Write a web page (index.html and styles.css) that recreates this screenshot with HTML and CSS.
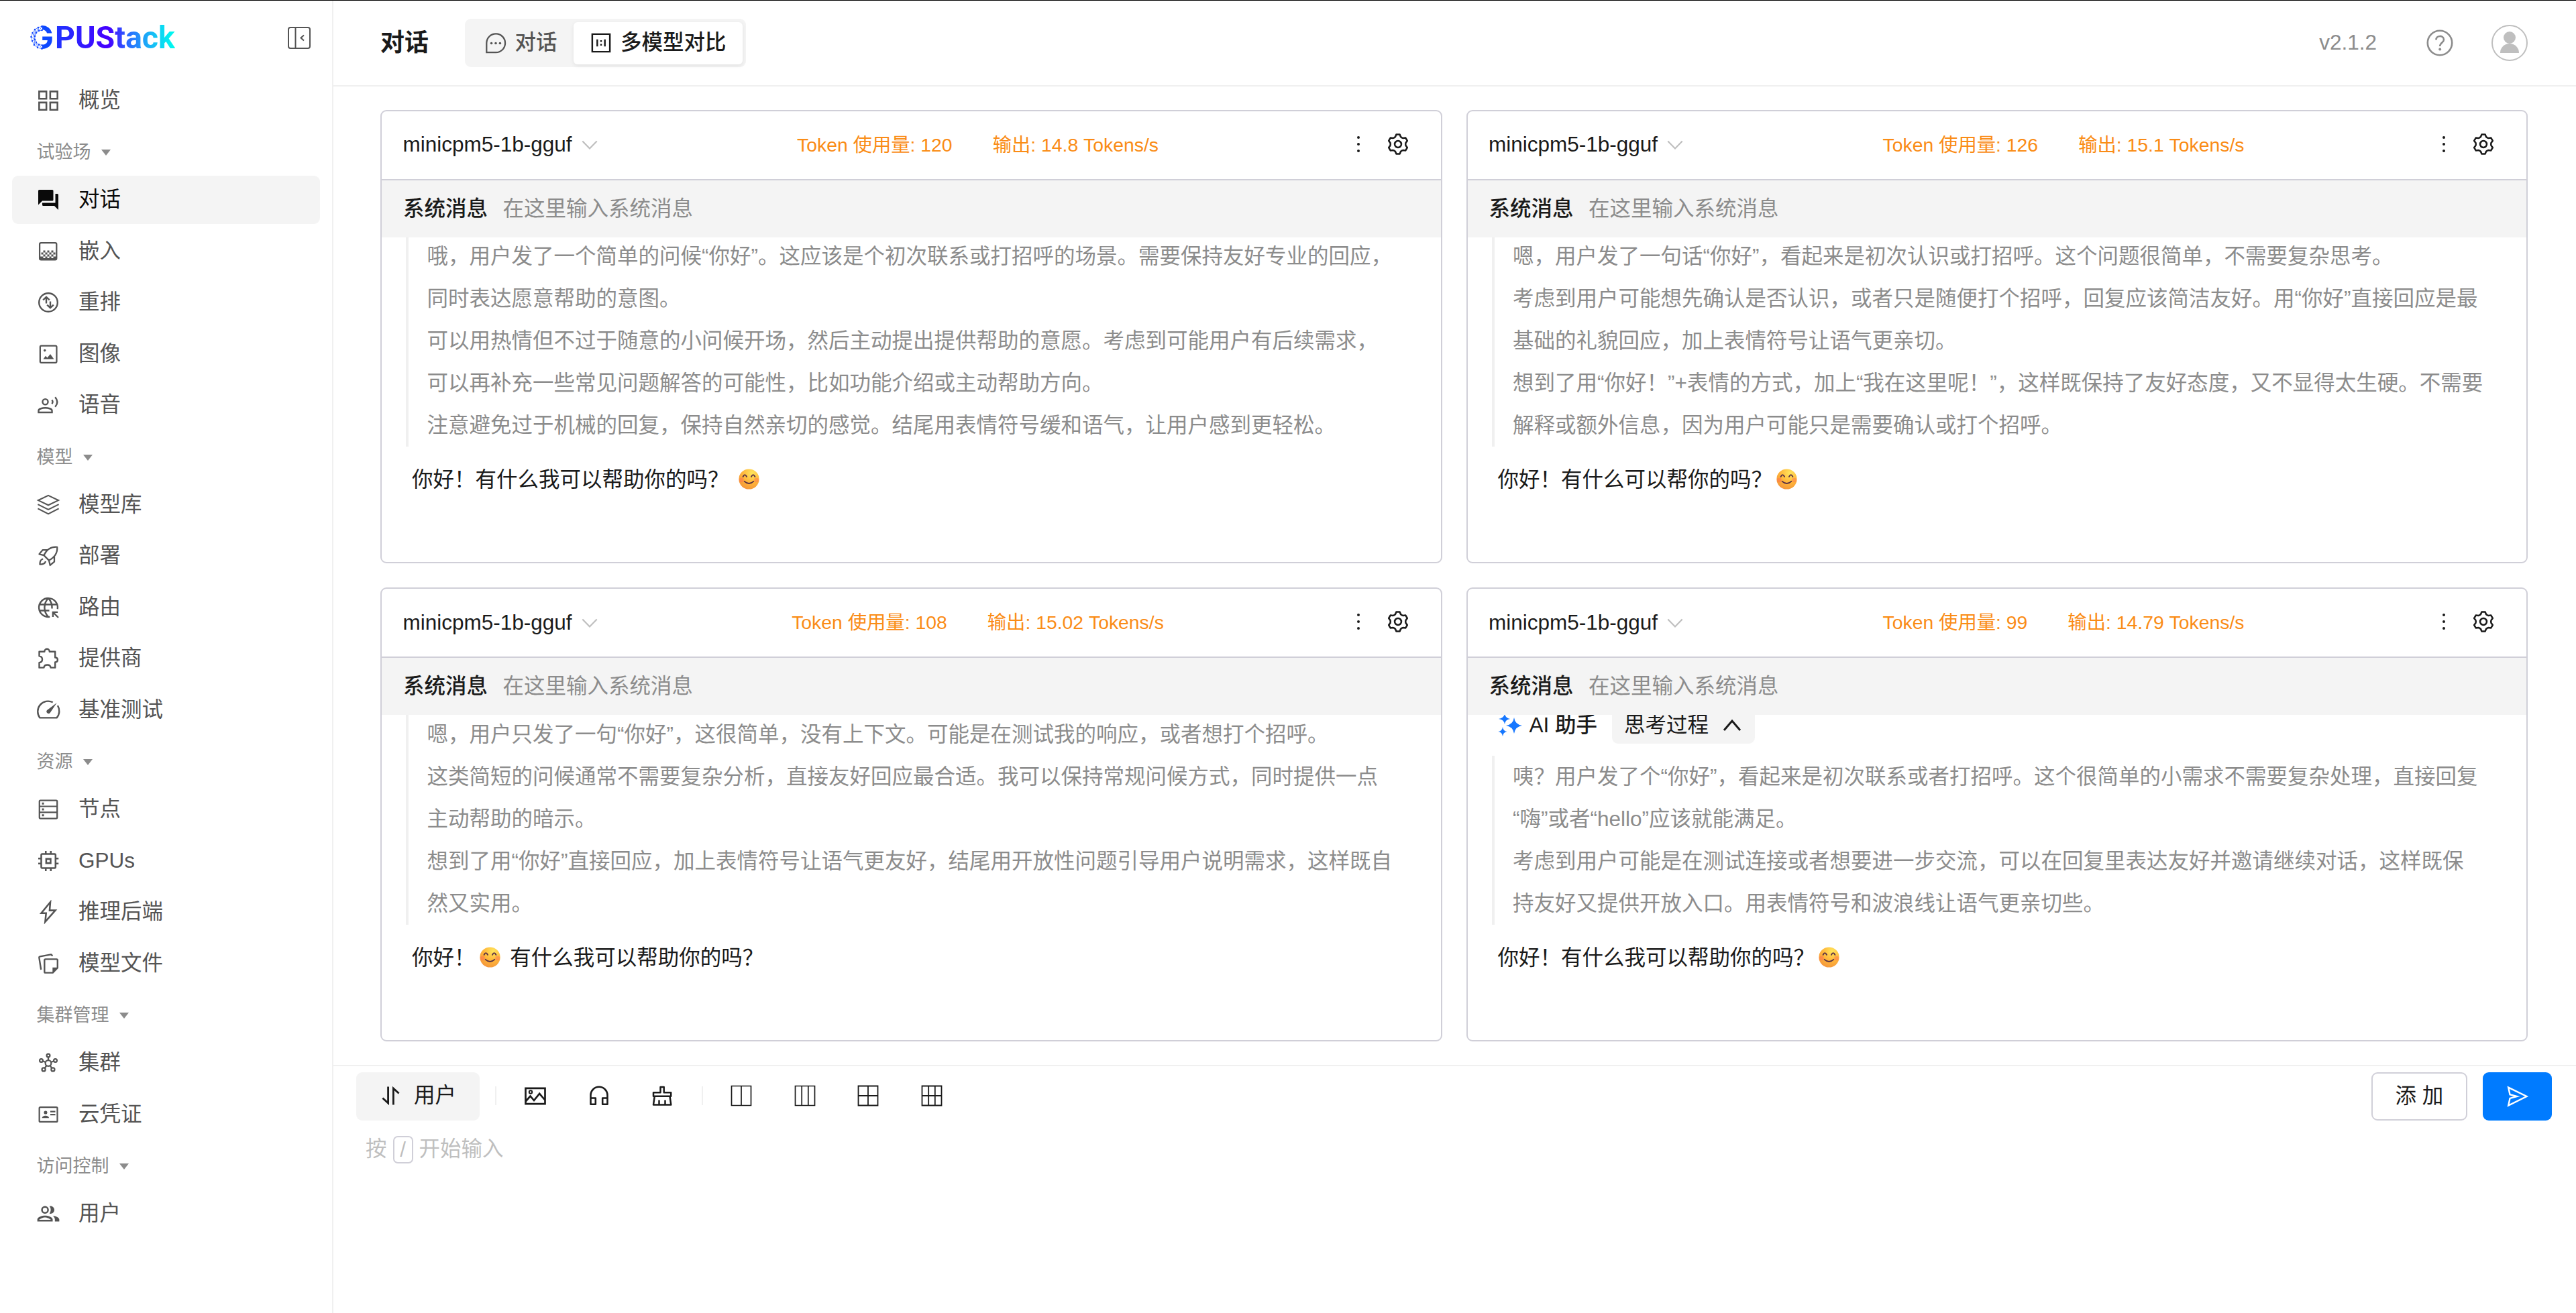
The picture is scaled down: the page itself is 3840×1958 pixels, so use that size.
FILE: index.html
```html
<!DOCTYPE html>
<html lang="zh-CN">
<head>
<meta charset="utf-8">
<title>GPUStack</title>
<link rel="stylesheet" href="styles.css">
</head>
<body>
<svg class="sprite" width="0" height="0" aria-hidden="true">
  <symbol id="i-grid" viewBox="0 0 24 24"><path fill="none" stroke="currentColor" stroke-width="1.7" d="M2.9 2.9h7.2v7.2H2.9zM13.9 2.9h7.2v7.2h-7.2zM2.9 13.9h7.2v7.2H2.9zM13.9 13.9h7.2v7.2h-7.2z"/></symbol>
  <symbol id="i-chat" viewBox="0 0 24 24"><path fill="currentColor" d="M3 2h13a1 1 0 0 1 1 1v9a1 1 0 0 1-1 1H6l-4 4V3a1 1 0 0 1 1-1zM19 6h2a1 1 0 0 1 1 1v15l-4-4H7a1 1 0 0 1-1-1v-2h13z"/></symbol>
  <symbol id="i-embed" viewBox="0 0 24 24"><rect x="3.4" y="3.4" width="16.8" height="16.8" rx="1.4" fill="none" stroke="currentColor" stroke-width="1.5"/><path fill="currentColor" d="M7 11h2v2H7zM11 11h2v2h-2zM15 11h2v2h-2zM5 13h2v2H5zM9 13h2v2H9zM13 13h2v2h-2zM17 13h2v2h-2zM7 15h2v2H7zM11 15h2v2h-2zM15 15h2v2h-2zM4 17h3v1.6h2V17h2v1.6h2V17h2v1.6h2V17h3v3.5H4z"/></symbol>
  <symbol id="i-rank" viewBox="0 0 24 24"><g fill="none" stroke="currentColor" stroke-width="1.6"><circle cx="12" cy="12" r="9.2"/><path d="M6.8 9.6 10 6.6l3.2 3M10 7v6M10.8 14.4l3.2 3 3.2-3M14 17v-6"/></g></symbol>
  <symbol id="i-image" viewBox="0 0 24 24"><rect x="3.9" y="3.7" width="16.4" height="16.8" rx="1.2" fill="none" stroke="currentColor" stroke-width="1.5"/><circle cx="8.5" cy="8.4" r="1.2" fill="currentColor"/><path fill="currentColor" d="m7 17 2.3-3.2 1.7 1.8 3-3.6 3.6 5z"/></symbol>
  <symbol id="i-voice" viewBox="0 0 24 24"><g fill="none" stroke="currentColor" stroke-width="1.6"><circle cx="9" cy="8.8" r="2.7"/><path d="M2.3 19.3v-1.6c0-2 4-2.9 6.7-2.9s6.7.9 6.7 2.9v1.6zM15.6 7q1.5 1.9 0 3.8M18.8 4.2q4.2 4.8 0 9.6"/></g></symbol>
  <symbol id="i-layers" viewBox="0 0 24 24"><g fill="none" stroke="currentColor" stroke-width="1.4"><path d="M12 2.6 22 7.4 12 12.2 2 7.4zM1.6 11.4 12 16.6l10.400-5.200M1.600 15.600 12 20.900l10.400-5.300"/></g></symbol>
  <symbol id="i-rocket" viewBox="0 0 24 24"><g fill="none" stroke="currentColor" stroke-width="1.5" stroke-linejoin="round"><path d="M7.600 11.400C10 6.500 14.500 2.700 20.800 3.200c.5 6-3.200 10.500-8.200 13.200zM11.400 6H6.500L3 10.200l4.600 1.200M18 12.600v5.200L13.800 21.300l-1.200-4.900M6.800 15c-2.200.400-3.200 2.800-3.200 5.400 2.800 0 5.200-.700 5.700-3.100"/></g></symbol>
  <symbol id="i-globe" viewBox="0 0 24 24"><g fill="none" stroke="currentColor" stroke-width="1.600"><path d="M13.500 21.200A9.300 9.300 0 1 1 21.200 13.500M3.200 9h17.600M3.200 15h9.800M12 2.800C7 8 7 16 12 21.200M12 2.800c2.800 2.900 3.900 6.500 3.700 10.200M22 22l-5-5M16.600 21.400v-4.800h4.800"/></g></symbol>
  <symbol id="i-puzzle" viewBox="0 0 24 24"><path fill="none" stroke="currentColor" stroke-width="1.600" stroke-linejoin="round" d="M3 5.200h5.200c0-3.600 5-3.600 5 0h5.600V11c3.300 0 3.300 4.600 0 4.600v5.500h-4.400c-.4-3.700-6.400-3.700-6.800 0H3v-5c4-.5 4-6 0-6.500z"/></symbol>
  <symbol id="i-gauge" viewBox="0 0 24 24"><g fill="none" stroke="currentColor" stroke-width="1.600" stroke-linejoin="round"><path d="M16.500 4.200A10.300 10.300 0 0 0 3.600 19.600h16.800a10.300 10.300 0 0 0 .900-12.200"/></g><path fill="currentColor" d="M20.500 4.700 13.800 14.700a2 2 0 1 1-3-2.700z"/></symbol>
  <symbol id="i-server" viewBox="0 0 24 24"><rect x="3.200" y="3" width="17.600" height="18" rx="1" fill="none" stroke="currentColor" stroke-width="1.500"/><path fill="none" stroke="currentColor" stroke-width="1.400" d="M3 9h18M3 14.900h18"/><path fill="currentColor" d="M5.700 5.100h2v2h-2zM5.700 11h2v2h-2zM5.700 16.900h2v2h-2z"/></symbol>
  <symbol id="i-chip" viewBox="0 0 24 24"><g fill="none" stroke="currentColor" stroke-width="1.700"><rect x="5" y="5" width="14.200" height="14" rx="1"/><path d="M9.900 9.900h4.400v4.200H9.900zM9.500 2v3M14.500 2v3M9.500 19v3M14.500 19v3M2 9.500h3M2 14.500h3M19 9.500h3.200M19 14.500h3.200"/></g></symbol>
  <symbol id="i-bolt" viewBox="0 0 24 24"><path fill="none" stroke="currentColor" stroke-width="1.700" d="M14 2.200 5 13.200h4.800L8.900 21.800 19 10.400h-5.700z"/></symbol>
  <symbol id="i-files" viewBox="0 0 24 24"><g fill="none" stroke="currentColor" stroke-width="1.600"><path d="M8.200 8.600q0-1 1-1h11q1 0 1 1v7.600l-4.700 4.900H9.200q-1 0-1-1zM4.800 18 2.900 6.100q-.1-1 .9-1.200L14.600 2.900q1-.1 1.300 1.700"/></g><path fill="currentColor" d="M16.200 15.800h5.300l-5.300 5.600z"/></symbol>
  <symbol id="i-hub" viewBox="0 0 24 24"><g fill="none" stroke="currentColor" stroke-width="1.500"><circle cx="12" cy="12.300" r="2.900"/><circle cx="12" cy="4.700" r="1.600"/><circle cx="5" cy="9.600" r="1.600"/><circle cx="19" cy="9.600" r="1.600"/><circle cx="7.400" cy="18.600" r="1.700"/><circle cx="16.600" cy="18.600" r="1.700"/><path d="M12 6.300v3M6.500 10.200l2.800 1.100M17.500 10.200l-2.800 1.100M8.500 17.300l1.700-2.600M15.500 17.300l-1.700-2.600"/></g></symbol>
  <symbol id="i-card" viewBox="0 0 24 24"><rect x="3.100" y="4.700" width="17.900" height="14.600" rx="1" fill="none" stroke="currentColor" stroke-width="1.500"/><path fill="currentColor" d="M5.800 15.500c0-3.200 6.900-3.200 6.900 0zM14 8.400h5v1.400h-5zM14 11.400h5v1.400h-5z"/><circle cx="9.300" cy="10" r="1.700" fill="currentColor"/></symbol>
  <symbol id="i-users" viewBox="1.300 1 21.400 22"><path fill="currentColor" d="M9 13.750c-2.340 0-7 1.170-7 3.500V19h14v-1.750c0-2.330-4.660-3.500-7-3.500zM3.600 17.500c.84-.9 3.600-2.200 5.400-2.200s4.560 1.300 5.400 2.200zM9 12c1.930 0 3.500-1.570 3.500-3.500S10.930 5 9 5 5.500 6.570 5.500 8.500 7.070 12 9 12zm0-5.500a2 2 0 1 1 0 4 2 2 0 0 1 0-4zm7.040 7.310c1.160.84 1.960 1.960 1.960 3.440V19h4v-1.750c0-2.020-3.500-3.170-5.960-3.440zM14 12c1.930 0 3.500-1.570 3.500-3.500S15.930 5 14 5c-.4 0-.6.100-.9.200 1.500 2 1.500 4.600 0 6.600.3.100.5.200.9.200z"/></symbol>

  <symbol id="i-collapse" viewBox="0 0 36 36"><g fill="none" stroke="currentColor" stroke-width="2"><rect x="2" y="3" width="32" height="31" rx="3"/><path d="M12.500 3v31M25 14.500 20.500 18.500l4.500 4" /></g></symbol>
  <symbol id="i-message" viewBox="0 0 36 36"><path fill="none" stroke="currentColor" stroke-width="2.400" d="M3.500 33V18A14.700 14.700 0 1 1 18 33z"/><g fill="currentColor"><circle cx="11.200" cy="18.500" r="1.900"/><circle cx="18" cy="18.500" r="1.900"/><circle cx="24.800" cy="18.500" r="1.900"/></g></symbol>
  <symbol id="i-ratio" viewBox="0 0 36 36"><path fill="none" stroke="currentColor" stroke-width="2.600" d="M4.100 4.100h27.800v27.800H4.100zM12 12.500v11M24 12.500v11"/><path fill="currentColor" d="M16.700 13.700h2.600v2.600h-2.600zM16.700 19.700h2.600v2.600h-2.600z"/></symbol>
  <symbol id="i-help" viewBox="0 0 40 40"><g fill="none" stroke="currentColor"><circle cx="20" cy="20" r="18.200" stroke-width="2.600"/><path stroke-width="2.600" d="M14.500 15.500c0-7.500 11.500-7.200 11.500-.5 0 4.500-5.800 4.500-5.800 10"/></g><circle cx="20.200" cy="29.500" r="2" fill="currentColor"/></symbol>
  <symbol id="i-down" viewBox="0 0 24 24"><path fill="none" stroke="currentColor" stroke-width="2.200" d="m1.300 6.500 10.700 11 10.700-11"/></symbol>
  <symbol id="i-up" viewBox="0 0 28 28"><path fill="none" stroke="currentColor" stroke-width="3" d="m2 21 12-14 12 14"/></symbol>
  <symbol id="i-dots" viewBox="0 0 24 24"><g fill="currentColor"><circle cx="12" cy="2" r="2"/><circle cx="12" cy="12" r="2"/><circle cx="12" cy="22" r="2"/></g></symbol>
  <symbol id="i-gear" viewBox="-12 -12 24 24"><g fill="none" stroke="currentColor" stroke-width="1.700" stroke-linejoin="round"><path d="M-1.700-9.650H1.700L2.670-7.330Q3.800-6.200 5.010-5.980L7.510-6.300 9.210-3.350 7.680-1.350Q7.300 0 7.680 1.350L9.210 3.350 7.510 6.300 5.010 5.980Q3.800 6.200 2.670 7.330L1.700 9.650H-1.700L-2.670 7.330Q-3.800 6.200-5.010 5.980L-7.510 6.300-9.210 3.350-7.680 1.350Q-7.300 0-7.680-1.350L-9.210-3.350-7.510-6.300-5.010-5.980Q-3.800-6.200-2.670-7.330z"/><circle r="3.300"/></g></symbol>
  <symbol id="i-sparkle" viewBox="0 0 36 36"><path fill="currentColor" d="M24 6q1.400 10.300 12 12-10.600 1.700-12 12-1.400-10.300-12-12Q22.600 16.300 24 6zM10 0q.900 6.900 8 8-7.100 1.100-8 8-.9-6.900-9-8 8.100-1.100 9-8zM7 20q.700 6 6.500 7Q7.700 28 7 34 6.300 28 .500 27 6.300 26 7 20z"/></symbol>
  <symbol id="i-swap" viewBox="0 0 28 28"><path fill="none" stroke="currentColor" stroke-width="2.800" d="M9.600.500V25L1.400 17.500M17.400 27.500V3l8.200 7.500"/></symbol>
  <symbol id="i-picture" viewBox="0 0 36 36"><g fill="none" stroke="currentColor" stroke-width="2.700"><path d="M3.500 6.800h29v23.400h-29zM4 26l6.500-7.500L16 25l8.200-10.200L32 24"/><circle cx="11" cy="12.500" r="2.200" stroke-width="2"/></g></symbol>
  <symbol id="i-headset" viewBox="0 0 36 36"><path fill="none" stroke="currentColor" stroke-width="2.600" stroke-linejoin="round" d="M5.500 21.500v-4.200a12.500 12.500 0 0 1 25 0v4.200M5.500 21.500h7.300v9.300H5.500zM23.200 21.500h7.300v9.300h-7.300z"/></symbol>
  <symbol id="i-clear" viewBox="0 0 36 36"><g fill="none" stroke="currentColor" stroke-width="2.500" stroke-linejoin="round"><path d="M15.500 5h5.200v8.200h10.500v5.600H5v-5.600h10.500zM6.800 18.800 5 31.500h26.300l-1.800-12.700M13.500 31v-6.500M22.500 31v-6.500"/></g></symbol>
  <symbol id="i-cols2" viewBox="0 0 36 36"><path fill="none" stroke="currentColor" stroke-width="1.700" d="M3.500 3.500h29v29h-29zM18 3.500v29"/></symbol>
  <symbol id="i-cols3" viewBox="0 0 36 36"><path fill="none" stroke="currentColor" stroke-width="1.700" d="M3.500 3.500h29v29h-29zM13.200 3.500v29M22.800 3.500v29"/></symbol>
  <symbol id="i-grid4" viewBox="0 0 36 36"><path fill="none" stroke="currentColor" stroke-width="1.800" d="M3.500 3.500h29v29h-29zM18 3.500v29M3.500 18h29"/></symbol>
  <symbol id="i-grid6" viewBox="0 0 36 36"><path fill="none" stroke="currentColor" stroke-width="1.800" d="M3.500 3.500h29v29h-29zM13.200 3.500v29M22.800 3.500v29M3.500 18h29"/></symbol>
  <symbol id="i-send" viewBox="0 0 36 36"><path fill="none" stroke="currentColor" stroke-width="2.400" d="M4.200 4.600 31.500 18 4.200 31.500l2.300-10.600L17 18 6.500 15.200z"/></symbol>
  <symbol id="i-smile" viewBox="0 0 32 32">
    <radialGradient id="face" cx=".65" cy=".2" r=".95"><stop offset="0" stop-color="#ffe55c"/><stop offset=".5" stop-color="#ffb53a"/><stop offset=".85" stop-color="#f59a3a"/><stop offset="1" stop-color="#ef5f80"/></radialGradient>
    <circle cx="16" cy="16" r="15.600" fill="url(#face)"/><circle cx="4.500" cy="17.500" r="3.500" fill="#ff6a55" opacity=".45"/><circle cx="27.500" cy="17.500" r="3.500" fill="#ff6a55" opacity=".4"/>
    <path fill="none" stroke="#5a3145" stroke-width="2" stroke-linecap="round" d="M6.800 12.200q2.700-5.600 5.600 0M19.600 12.200q2.800-5.600 5.600 0M9 19.500q7 6.500 14 0"/>
  </symbol>
</svg>

<div class="app">
  <aside class="sidebar">
    <div class="brand">
      <div class="logo">
        <span class="logo-g">G</span><span class="logo-text">PUStack</span>
        <svg class="logo-mesh" viewBox="0 0 19 36"><g fill="none" stroke="#2b62ff" stroke-width=".7"><path d="M18 1 12 3 7 6 3.500 11 1.500 17 3 23 6 29 11 33 18 35M18 7 13 8 9 11 7 16 7 21 9 25 13 28.500 18 29.500M18 1l-5 7-1-5-3 8-2-5 0 10-3.500-5L7 21l-5.500-4M3 23l4-2-1 8 3-4 2 8 2-4.500 5 6.500"/></g><g fill="#1346ff"><circle cx="17.500" cy="1.500" r="1.400"/><circle cx="12" cy="3" r="1.300"/><circle cx="7" cy="6" r="1.300"/><circle cx="3.500" cy="11" r="1.200"/><circle cx="1.500" cy="17" r="1.300"/><circle cx="3" cy="23" r="1.200"/><circle cx="6" cy="29" r="1.300"/><circle cx="11" cy="33" r="1.200"/><circle cx="17.500" cy="34.500" r="1.400"/><circle cx="17.500" cy="7" r="1.300"/><circle cx="13" cy="8" r="1.200"/><circle cx="9" cy="11" r="1.300"/><circle cx="7" cy="16" r="1.200"/><circle cx="7" cy="21" r="1.300"/><circle cx="9" cy="25" r="1.200"/><circle cx="13" cy="28.500" r="1.300"/><circle cx="17.500" cy="29.500" r="1.300"/></g></svg>
      </div>
      <svg class="icon collapse"><use href="#i-collapse"/></svg>
    </div>
    <nav class="menu">
      <a class="item"><svg class="icon"><use href="#i-grid"/></svg>概览</a>
      <div class="group">试验场<i class="caret"></i></div>
      <a class="item active"><svg class="icon"><use href="#i-chat"/></svg>对话</a>
      <a class="item"><svg class="icon"><use href="#i-embed"/></svg>嵌入</a>
      <a class="item"><svg class="icon"><use href="#i-rank"/></svg>重排</a>
      <a class="item"><svg class="icon"><use href="#i-image"/></svg>图像</a>
      <a class="item"><svg class="icon"><use href="#i-voice"/></svg>语音</a>
      <div class="group">模型<i class="caret"></i></div>
      <a class="item"><svg class="icon"><use href="#i-layers"/></svg>模型库</a>
      <a class="item"><svg class="icon"><use href="#i-rocket"/></svg>部署</a>
      <a class="item"><svg class="icon"><use href="#i-globe"/></svg>路由</a>
      <a class="item"><svg class="icon"><use href="#i-puzzle"/></svg>提供商</a>
      <a class="item"><svg class="icon"><use href="#i-gauge"/></svg>基准测试</a>
      <div class="group">资源<i class="caret"></i></div>
      <a class="item"><svg class="icon"><use href="#i-server"/></svg>节点</a>
      <a class="item"><svg class="icon"><use href="#i-chip"/></svg>GPUs</a>
      <a class="item"><svg class="icon"><use href="#i-bolt"/></svg>推理后端</a>
      <a class="item"><svg class="icon"><use href="#i-files"/></svg>模型文件</a>
      <div class="group">集群管理<i class="caret"></i></div>
      <a class="item"><svg class="icon"><use href="#i-hub"/></svg>集群</a>
      <a class="item"><svg class="icon"><use href="#i-card"/></svg>云凭证</a>
      <div class="group">访问控制<i class="caret"></i></div>
      <a class="item"><svg class="icon"><use href="#i-users"/></svg>用户</a>
    </nav>
  </aside>

  <main class="main">
    <header class="header">
      <h1 class="title">对话</h1>
      <div class="segmented">
        <div class="segment"><svg class="icon"><use href="#i-message"/></svg>对话</div>
        <div class="segment selected"><svg class="icon"><use href="#i-ratio"/></svg>多模型对比</div>
      </div>
      <div class="header-right">
        <span class="version">v2.1.2</span>
        <svg class="icon help"><use href="#i-help"/></svg>
        <span class="avatar"><svg viewBox="0 0 54 54"><circle cx="27" cy="19" r="9" fill="#bfbfbf"/><path fill="#bfbfbf" d="M13 42a14 14 0 0 1 28 0z"/></svg></span>
      </div>
    </header>

    <section class="cards">
      <article class="card">
        <div class="card-head">
          <div class="model">minicpm5-1b-gguf<svg class="icon"><use href="#i-down"/></svg></div>
          <div class="stats"><span>Token 使用量: 120</span><span>输出: 14.8 Tokens/s</span></div>
          <div class="actions"><svg class="icon dots"><use href="#i-dots"/></svg><svg class="icon gear"><use href="#i-gear"/></svg></div>
        </div>
        <div class="system"><b>系统消息</b><span>在这里输入系统消息</span></div>
        <div class="chat">
          <div class="think">哦，用户发了一个简单的问候“你好”。这应该是个初次联系或打招呼的场景。需要保持友好专业的回应，<br>同时表达愿意帮助的意图。<br>可以用热情但不过于随意的小问候开场，然后主动提出提供帮助的意愿。考虑到可能用户有后续需求，<br>可以再补充一些常见问题解答的可能性，比如功能介绍或主动帮助方向。<br>注意避免过于机械的回复，保持自然亲切的感觉。结尾用表情符号缓和语气，让用户感到更轻松。</div>
          <p class="answer">你好！有什么我可以帮助你的吗？ <svg class="smile"><use href="#i-smile"/></svg></p>
        </div>
      </article>

      <article class="card">
        <div class="card-head">
          <div class="model">minicpm5-1b-gguf<svg class="icon"><use href="#i-down"/></svg></div>
          <div class="stats"><span>Token 使用量: 126</span><span>输出: 15.1 Tokens/s</span></div>
          <div class="actions"><svg class="icon dots"><use href="#i-dots"/></svg><svg class="icon gear"><use href="#i-gear"/></svg></div>
        </div>
        <div class="system"><b>系统消息</b><span>在这里输入系统消息</span></div>
        <div class="chat">
          <div class="think">嗯，用户发了一句话“你好”，看起来是初次认识或打招呼。这个问题很简单，不需要复杂思考。<br>考虑到用户可能想先确认是否认识，或者只是随便打个招呼，回复应该简洁友好。用“你好”直接回应是最<br>基础的礼貌回应，加上表情符号让语气更亲切。<br>想到了用“你好！”+表情的方式，加上“我在这里呢！”，这样既保持了友好态度，又不显得太生硬。不需要<br>解释或额外信息，因为用户可能只是需要确认或打个招呼。</div>
          <p class="answer">你好！有什么可以帮你的吗？<svg class="smile"><use href="#i-smile"/></svg></p>
        </div>
      </article>

      <article class="card">
        <div class="card-head">
          <div class="model">minicpm5-1b-gguf<svg class="icon"><use href="#i-down"/></svg></div>
          <div class="stats"><span>Token 使用量: 108</span><span>输出: 15.02 Tokens/s</span></div>
          <div class="actions"><svg class="icon dots"><use href="#i-dots"/></svg><svg class="icon gear"><use href="#i-gear"/></svg></div>
        </div>
        <div class="system"><b>系统消息</b><span>在这里输入系统消息</span></div>
        <div class="chat">
          <div class="think">嗯，用户只发了一句“你好”，这很简单，没有上下文。可能是在测试我的响应，或者想打个招呼。<br>这类简短的问候通常不需要复杂分析，直接友好回应最合适。我可以保持常规问候方式，同时提供一点<br>主动帮助的暗示。<br>想到了用“你好”直接回应，加上表情符号让语气更友好，结尾用开放性问题引导用户说明需求，这样既自<br>然又实用。</div>
          <p class="answer">你好！<svg class="smile"><use href="#i-smile"/></svg> 有什么我可以帮助你的吗？</p>
        </div>
      </article>

      <article class="card">
        <div class="card-head">
          <div class="model">minicpm5-1b-gguf<svg class="icon"><use href="#i-down"/></svg></div>
          <div class="stats"><span>Token 使用量: 99</span><span>输出: 14.79 Tokens/s</span></div>
          <div class="actions"><svg class="icon dots"><use href="#i-dots"/></svg><svg class="icon gear"><use href="#i-gear"/></svg></div>
        </div>
        <div class="system"><b>系统消息</b><span>在这里输入系统消息</span></div>
        <div class="chat">
          <div class="role"><svg class="icon spark"><use href="#i-sparkle"/></svg><span class="role-name">AI 助手</span><span class="process">思考过程<svg class="icon"><use href="#i-up"/></svg></span></div>
          <div class="think">咦？用户发了个“你好”，看起来是初次联系或者打招呼。这个很简单的小需求不需要复杂处理，直接回复<br>“嗨”或者“hello”应该就能满足。<br>考虑到用户可能是在测试连接或者想要进一步交流，可以在回复里表达友好并邀请继续对话，这样既保<br>持友好又提供开放入口。用表情符号和波浪线让语气更亲切些。</div>
          <p class="answer">你好！有什么我可以帮助你的吗？<svg class="smile"><use href="#i-smile"/></svg></p>
        </div>
      </article>
    </section>

    <section class="composer">
      <div class="toolbar">
        <div class="role-btn"><svg class="icon swap"><use href="#i-swap"/></svg>用户</div>
        <i class="divider"></i>
        <div class="tools">
          <svg class="icon"><use href="#i-picture"/></svg>
          <svg class="icon"><use href="#i-headset"/></svg>
          <svg class="icon"><use href="#i-clear"/></svg>
        </div>
        <i class="divider"></i>
        <div class="tools layouts">
          <svg class="icon"><use href="#i-cols2"/></svg>
          <svg class="icon"><use href="#i-cols3"/></svg>
          <svg class="icon"><use href="#i-grid4"/></svg>
          <svg class="icon"><use href="#i-grid6"/></svg>
        </div>
        <div class="submit">
          <div class="add">添 加</div>
          <div class="send"><svg class="icon"><use href="#i-send"/></svg></div>
        </div>
      </div>
      <div class="prompt">按<kbd>/</kbd>开始输入</div>
    </section>
  </main>
</div>
</body>
</html>
```
FILE: styles.css
```css
* { box-sizing: border-box; }

html, body { height: 100%; margin: 0; }

body {
  background: #fff;
  color: #1a1a1a;
  font: 31.5px/1.5 "Liberation Sans", "Noto Sans CJK SC", sans-serif;
  overflow: hidden;
}

.sprite { display: block; position: absolute; }
.icon { display: block; width: 36px; height: 36px; flex: none; overflow: visible; }

.app { display: flex; height: 100%; border-top: 1px solid #000; }

/* Sidebar */
.sidebar { width: 495px; flex: none; padding: 0 18px; color: #545454; }
.brand {
  display: flex;
  align-items: center;
  justify-content: space-between;
  height: 112.500px;
  padding: 0 13px 3px 27px;
}
.logo { position: relative; display: flex; align-items: center; height: 54px; font-weight: 700; }
.logo span { color: transparent; -webkit-background-clip: text; background-clip: text; }
.logo-g {
  width: 36px;
  font: 700 48px/54px Inter, sans-serif;
  text-indent: -1px;
  background-image: linear-gradient(90deg, #0a4bff, #0f46ff);
  -webkit-mask-image: linear-gradient(90deg, transparent 50%, #000 50%);
  mask-image: linear-gradient(90deg, transparent 50%, #000 50%);
}
.logo-text {
  margin-left: 1px;
  font: 700 46.500px/54px Roboto, sans-serif;
  background-image: linear-gradient(90deg, #1f35ff, #4600ff 45%, #2a66ff 60%, #18b8f6 80%, #00f5f0 97%);
}
.logo-mesh { position: absolute; left: 0; top: 9px; width: 19px; height: 36px; }

.item, .group { display: flex; align-items: center; height: 72px; }
.item { gap: 27px; margin-bottom: 4.500px; padding-left: 36px; border-radius: 9px; }
.item.active { background: #f4f4f4; color: #0a0a0a; }
.group { gap: 15px; padding: 3px 0 0 36.500px; font-size: 27px; color: #8c8c8c; }
.caret { border: 7.500px solid transparent; border-top: 9px solid currentColor; border-bottom: 0; }

/* Header */
.main { flex: 1; min-width: 0; display: flex; flex-direction: column; border-left: 2px solid #f0f0f0; }
.header {
  display: flex;
  align-items: center;
  height: 128px;
  padding: 0 72px 0 70px;
  border-bottom: 2px solid #f0f0f0;
}
.title { width: 126px; margin: 0; font-size: 36px; font-weight: 600; }
.segmented {
  display: flex;
  height: 72px;
  padding: 4.500px;
  border-radius: 9px;
  background: #f4f4f4;
}
.segment { display: flex; align-items: center; gap: 12px; padding: 0 24.500px 0 24px; font-weight: 500; color: #545454; }
.segment .icon { width: 34px; height: 34px; }
.segment.selected {
  border-radius: 6px;
  background: #fff;
  color: #1a1a1a;
  box-shadow: 0 2px 6px rgba(0, 0, 0, .08);
}
.header-right { display: flex; align-items: center; margin-left: auto; color: #8c8c8c; }
.help { width: 40px; height: 40px; margin: 0 57px 0 74px; }
.avatar { width: 54px; height: 54px; border: 2px solid #bfbfbf; border-radius: 50%; }
.avatar svg { display: block; width: 54px; height: 54px; margin: -2px; }

/* Comparison cards */
.cards {
  display: grid;
  grid-template: repeat(2, 676.500px) / repeat(2, 1fr);
  gap: 36px;
  padding: 34.500px 72px 35.500px 70px;
}
.card {
  display: flex;
  flex-direction: column;
  min-width: 0;
  overflow: hidden;
  border: 2px solid #d0cfd8;
  border-radius: 9px;
}
.card-head {
  display: flex;
  align-items: center;
  flex: none;
  height: 103px;
  padding: 0 46px 0 31.500px;
  border-bottom: 2px solid #d0cfd8;
}
.model { display: flex; align-items: center; gap: 14px; width: 312px; }
.model .icon { width: 24px; height: 24px; color: #bfbfbf; }
.stats { flex: 1; display: flex; justify-content: center; gap: 60px; font-size: 28.350px; color: #fa8c16; }
.actions { display: flex; align-items: center; gap: 29px; padding: 0 0 3px 10px; }
.dots { width: 24px; height: 24px; }
.system {
  display: flex;
  align-items: center;
  flex: none;
  gap: 22.500px;
  height: 85px;
  padding: 1px 32px 0;
  background: #f4f4f4;
}
.system b { font-weight: 500; }
.system span { color: #8c8c8c; }
.chat {
  flex: 1;
  min-height: 0;
  display: flex;
  flex-direction: column;
  justify-content: flex-end;
  overflow: hidden;
  padding: 0 36px 91px;
  white-space: nowrap;
}
.think { flex: none; padding-left: 27.500px; border-left: 4px solid #f0f0f0; line-height: 63px; color: #8c8c8c; }
.answer { flex: none; margin: 18px 0 0; padding-left: 9px; line-height: 63px; }
.smile { width: 31px; height: 31px; margin: 0 6px 0 6px; vertical-align: -4px; }
.role { flex: none; display: flex; align-items: center; height: 54px; margin-bottom: 18px; padding-left: 9px; }
.spark { color: #1677ff; }
.role-name { margin-left: 11px; font-weight: 500; }
.process {
  display: flex;
  align-items: center;
  gap: 21px;
  height: 54px;
  margin-left: 22px;
  padding: 0 20px 0 18px;
  border-radius: 9px;
  background: #f4f4f4;
}
.process .icon { width: 28px; height: 28px; }

/* Composer */
.composer { flex: 1; padding: 9px 36px 0 34px; border-top: 2px solid #f0f0f0; }
.toolbar { display: flex; align-items: center; height: 72px; }
.role-btn {
  display: flex;
  align-items: center;
  gap: 20px;
  width: 184px;
  height: 72px;
  padding: 0 0 3px 38px;
  border-radius: 9px;
  background: #f4f4f4;
}
.swap { width: 28px; height: 28px; }
.divider { width: 2px; height: 28px; margin: 0 40px 3px 23px; background: #f0f0f0; }
.tools { display: flex; gap: 58.500px; padding-bottom: 3px; }
.tools + .divider { margin: 0 39.500px 3px 40.500px; }
.submit { display: flex; gap: 23px; margin-left: auto; }
.add, .send { display: flex; align-items: center; justify-content: center; height: 72px; border-radius: 9px; }
.add { width: 143px; border: 2px solid #d0cfd8; }
.send { width: 103px; background: #007bff; color: #fff; }
.prompt { display: flex; align-items: center; gap: 9px; height: 48px; margin: 19px 0 0 14px; color: #bfbfbf; }
kbd {
  width: 30px;
  height: 41px;
  border: 2px solid #d0cfd8;
  border-radius: 7px;
  font: inherit;
  line-height: 37px;
  text-align: center;
}
```
